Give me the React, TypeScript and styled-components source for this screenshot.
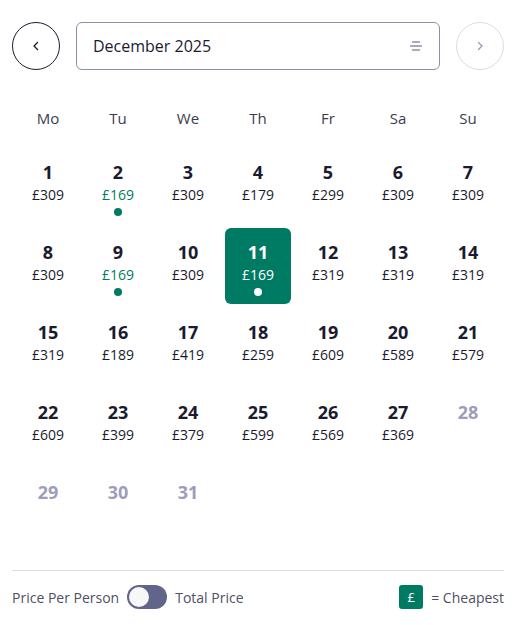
import { createGlobalStyle, styled } from "styled-components";

type Day = {
  date: number;
  price?: number;
  cheapest?: boolean;
  selected?: boolean;
};

const GlobalStyle = createGlobalStyle`
  body {
    margin: 0;
    font-family: "Open Sans", "Noto Sans", sans-serif;
    background: #fff;
    color: #1b1b2f;
  }
`;

const Page = styled.div`
  width: 517px;
  height: 625px;
  box-sizing: border-box;
  padding: 22px 13px 0 12px;
  display: flex;
  flex-direction: column;
`;

const Header = styled.header`
  display: flex;
  align-items: center;
  gap: 16px;
`;

const RoundButton = styled.button<{ $disabled?: boolean }>`
  width: 48px;
  height: 48px;
  flex: none;
  border-radius: 50%;
  background: #fff;
  border: 1px solid ${(p) => (p.$disabled ? "#dcdcea" : "#1b1b2f")};
  color: ${(p) => (p.$disabled ? "#9a9ab8" : "#1b1b2f")};
  display: flex;
  align-items: center;
  justify-content: center;
  padding: 0;
`;

const MonthSelect = styled.div`
  flex: 1;
  height: 48px;
  box-sizing: border-box;
  border: 1px solid #8f8fab;
  border-radius: 6px;
  padding: 0 16px;
  display: flex;
  align-items: center;
  justify-content: space-between;
  font-size: 16px;
  color: #1b1b2f;
`;

const Weekdays = styled.div`
  display: grid;
  grid-template-columns: repeat(7, 70px);
  margin: 38px 0 20px 1px;
`;

const Weekday = styled.div`
  text-align: center;
  font-size: 15px;
  line-height: 20px;
  color: #3b3b4f;
`;

const Grid = styled.div`
  display: grid;
  grid-template-columns: repeat(7, 70px);
  row-gap: 4px;
  margin-left: 1px;
`;

const Cell = styled.div<{ $selected?: boolean }>`
  height: 76px;
  margin: 0 2px;
  box-sizing: border-box;
  padding-top: 12px;
  border-radius: 6px;
  display: flex;
  flex-direction: column;
  align-items: center;
  background: ${(p) => (p.$selected ? "#007b63" : "transparent")};
  color: ${(p) => (p.$selected ? "#fff" : "#1b1b2f")};
`;

const DateNum = styled.div<{ $muted?: boolean }>`
  font-size: 18px;
  line-height: 24px;
  font-weight: 700;
  color: ${(p) => (p.$muted ? "#9d9dbb" : "inherit")};
`;

const Price = styled.div<{ $cheap?: boolean }>`
  font-size: 14px;
  line-height: 22px;
  color: ${(p) => (p.$cheap ? "#007b63" : "inherit")};
`;

const Dot = styled.span<{ $light?: boolean }>`
  width: 8px;
  height: 8px;
  margin-top: 2px;
  border-radius: 50%;
  background: ${(p) => (p.$light ? "#fff" : "#007b63")};
`;

const Footer = styled.footer`
  margin-top: auto;
  border-top: 1px solid #dcdcea;
  height: 52px;
  margin-bottom: 2px;
  display: flex;
  align-items: center;
  justify-content: space-between;
  font-size: 14px;
  color: #4f4f66;
`;

const ToggleGroup = styled.div`
  display: flex;
  align-items: center;
  gap: 8px;
`;

const Toggle = styled.div`
  width: 40px;
  height: 24px;
  border-radius: 12px;
  background: #62658a;
  padding: 2px;
  box-sizing: border-box;
  display: flex;
  align-items: center;
`;

const Knob = styled.span`
  width: 20px;
  height: 20px;
  border-radius: 50%;
  background: #f7f7fa;
`;

const Legend = styled.div`
  display: flex;
  align-items: center;
  gap: 8px;
`;

const LegendBox = styled.span`
  width: 24px;
  height: 24px;
  border-radius: 3px;
  background: #007b63;
  color: #fff;
  font-size: 13px;
  display: flex;
  align-items: center;
  justify-content: center;
`;

const prices: Record<number, number> = {
  1: 309, 2: 169, 3: 309, 4: 179, 5: 299, 6: 309, 7: 309,
  8: 309, 9: 169, 10: 309, 11: 169, 12: 319, 13: 319, 14: 319,
  15: 319, 16: 189, 17: 419, 18: 259, 19: 609, 20: 589, 21: 579,
  22: 609, 23: 399, 24: 379, 25: 599, 26: 569, 27: 369,
};

const days: Day[] = Array.from({ length: 31 }, (_, i) => {
  const date = i + 1;
  const price = prices[date];
  return { date, price, cheapest: price === 169, selected: date === 11 };
});

const weekdays = ["Mo", "Tu", "We", "Th", "Fr", "Sa", "Su"];

function Chevron({ dir }: { dir: "left" | "right" }) {
  return (
    <svg width="14" height="14" viewBox="0 0 14 14" fill="none">
      <path
        d={dir === "left" ? "M8.5 3.5 5 7l3.5 3.5" : "M5.5 3.5 9 7l-3.5 3.5"}
        stroke="currentColor"
        strokeWidth="1.4"
        strokeLinecap="round"
        strokeLinejoin="round"
      />
    </svg>
  );
}

function FilterIcon() {
  return (
    <svg width="14" height="14" viewBox="0 0 14 14" fill="none">
      <path d="M3.5 3h7M1.5 7h11M3.5 11h7" stroke="#8f8fab" strokeWidth="1.3" strokeLinecap="round" />
    </svg>
  );
}

export default function App() {
  return (
    <>
      <GlobalStyle />
      <Page>
        <Header>
          <RoundButton aria-label="Previous month">
            <Chevron dir="left" />
          </RoundButton>
          <MonthSelect>
            December 2025
            <FilterIcon />
          </MonthSelect>
          <RoundButton $disabled aria-label="Next month">
            <Chevron dir="right" />
          </RoundButton>
        </Header>

        <Weekdays>
          {weekdays.map((d) => (
            <Weekday key={d}>{d}</Weekday>
          ))}
        </Weekdays>

        <Grid>
          {days.map((d) => (
            <Cell key={d.date} $selected={d.selected}>
              <DateNum $muted={!d.price}>{d.date}</DateNum>
              {d.price && <Price $cheap={d.cheapest && !d.selected}>£{d.price}</Price>}
              {d.cheapest && <Dot $light={d.selected} />}
            </Cell>
          ))}
        </Grid>

        <Footer>
          <ToggleGroup>
            Price Per Person
            <Toggle>
              <Knob />
            </Toggle>
            Total Price
          </ToggleGroup>
          <Legend>
            <LegendBox>£</LegendBox>= Cheapest
          </Legend>
        </Footer>
      </Page>
    </>
  );
}
